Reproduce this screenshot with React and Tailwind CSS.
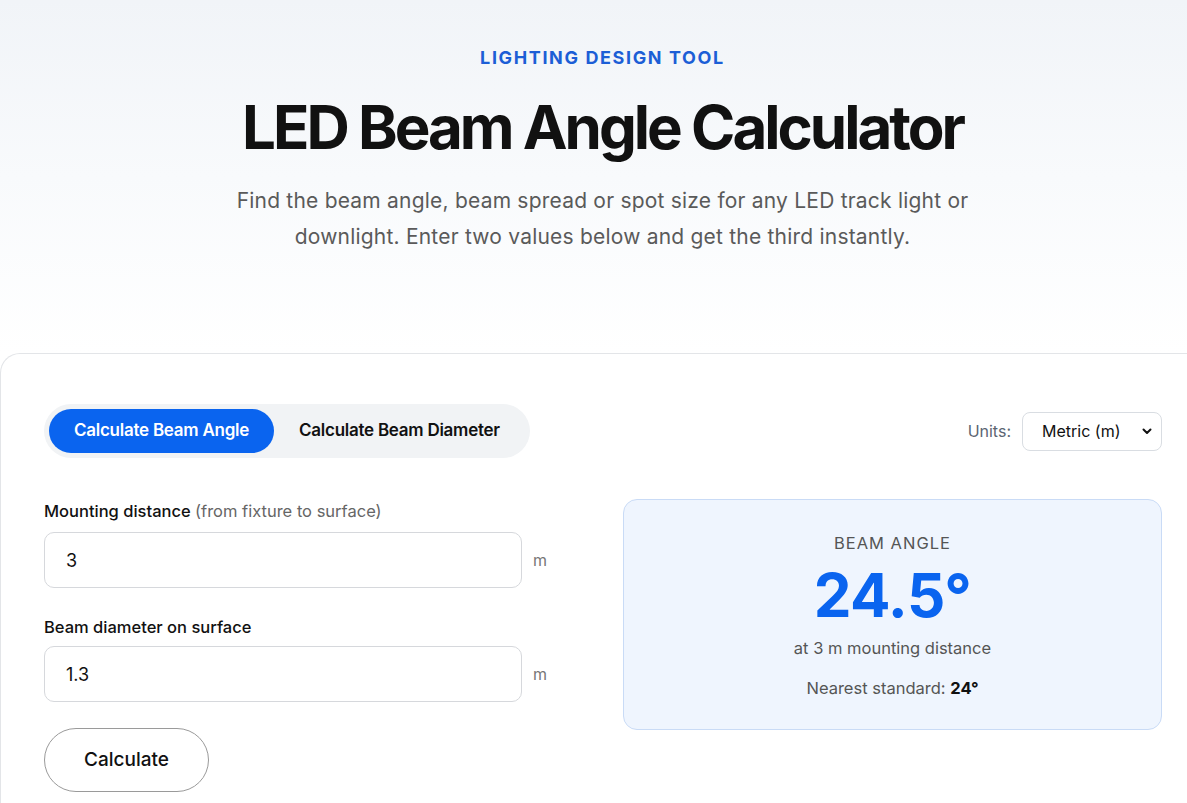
import React from "react";

export default function App() {
  return (
    <div className="w-full min-h-[803px] overflow-hidden bg-white">
      <div
        className="w-[1205px] text-[#111]"
        style={{ fontFamily: "Inter, 'Noto Sans', sans-serif" }}
      >
        <header className="bg-gradient-to-b from-[#f1f4f8] via-[#f8fafc] to-white pt-[44px] pb-[98px] text-center">
          <div className="text-[18px] leading-[28px] font-bold tracking-[0.09em] text-[#1c5ed6]">
            LIGHTING DESIGN TOOL
          </div>
          <h1 className="mt-[21px] text-[60px] leading-[68px] font-bold tracking-[-0.05em] text-[#111]">
            LED Beam Angle Calculator
          </h1>
          <p className="mx-auto mt-[22px] max-w-[800px] text-[21px] leading-[36px] tracking-[0.01em] text-[#5a5a5a]">
            Find the beam angle, beam spread or spot size for any LED track light or
            <br />
            downlight. Enter two values below and get the third instantly.
          </p>
        </header>

        <section className="rounded-tl-[20px] border-t border-l border-[#e3e5e8] bg-white px-[43px] pt-[50px] pb-[40px]">
          <div className="flex items-center justify-between">
            <div className="flex items-center rounded-full bg-[#f1f3f5] p-[5px]">
              <button className="h-[44px] rounded-full bg-[#0a64ef] px-[25px] text-[17px] font-semibold text-white tracking-[-0.015em]">
                Calculate Beam Angle
              </button>
              <button className="h-[44px] rounded-full px-[25px] text-[17px] font-semibold text-[#111] tracking-[-0.015em]">
                Calculate Beam Diameter
              </button>
            </div>
            <div className="flex items-center gap-[11px]">
              <span className="text-[16px] text-[#5b6572]">Units:</span>
              <div className="flex h-[39px] w-[140px] items-center justify-between rounded-[8px] border border-[#d9dde2] bg-white pl-[19px] pr-[8px] text-[16px] text-[#111]">
                <span>Metric (m)</span>
                <svg width="12" height="12" viewBox="0 0 12 12" fill="none">
                  <path d="M2.5 4.5L6 8L9.5 4.5" stroke="#111" strokeWidth="2" strokeLinecap="round" strokeLinejoin="round" />
                </svg>
              </div>
            </div>
          </div>

          <div className="mt-[41px] grid grid-cols-2 gap-[40px]">
            <div>
              <label className="block text-[16.5px] leading-[24px] font-medium text-[#111]">
                Mounting distance <span className="font-normal text-[#666]">(from fixture to surface)</span>
              </label>
              <div className="mt-[9px] flex items-center gap-[11px]">
                <div className="flex h-[56px] w-[478px] items-center rounded-[10px] border border-[#d6d8dc] px-[21px] text-[18px] text-[#111]">
                  3
                </div>
                <span className="text-[16px] text-[#777]">m</span>
              </div>

              <label className="mt-[27px] block text-[16.5px] leading-[24px] font-medium text-[#111]">
                Beam diameter on surface
              </label>
              <div className="mt-[7px] flex items-center gap-[11px]">
                <div className="flex h-[56px] w-[478px] items-center rounded-[10px] border border-[#d6d8dc] px-[21px] text-[18px] text-[#111]">
                  1.3
                </div>
                <span className="text-[16px] text-[#777]">m</span>
              </div>

              <button className="mt-[26px] h-[64px] w-[165px] rounded-full border border-[#9a9a9a] bg-white text-[19px] font-medium text-[#111]">
                Calculate
              </button>
            </div>

            <div>
              <div className="flex h-[231px] flex-col items-center rounded-[14px] border border-[#c9dbf6] bg-[#eff5fe] pt-[33px] text-center">
                <div className="text-[16.5px] leading-[20px] tracking-[0.06em] text-[#555]">BEAM ANGLE</div>
                <div className="mt-[7px] text-[60px] leading-[70px] font-bold tracking-[-0.01em] text-[#0a64ef]">
                  24.5°
                </div>
                <div className="mt-[6px] text-[16.5px] leading-[24px] text-[#555]">at 3 m mounting distance</div>
                <div className="mt-[16px] text-[16.5px] leading-[24px] text-[#555]">
                  Nearest standard: <span className="font-bold text-[#111]">24°</span>
                </div>
              </div>
            </div>
          </div>
        </section>
      </div>
    </div>
  );
}
